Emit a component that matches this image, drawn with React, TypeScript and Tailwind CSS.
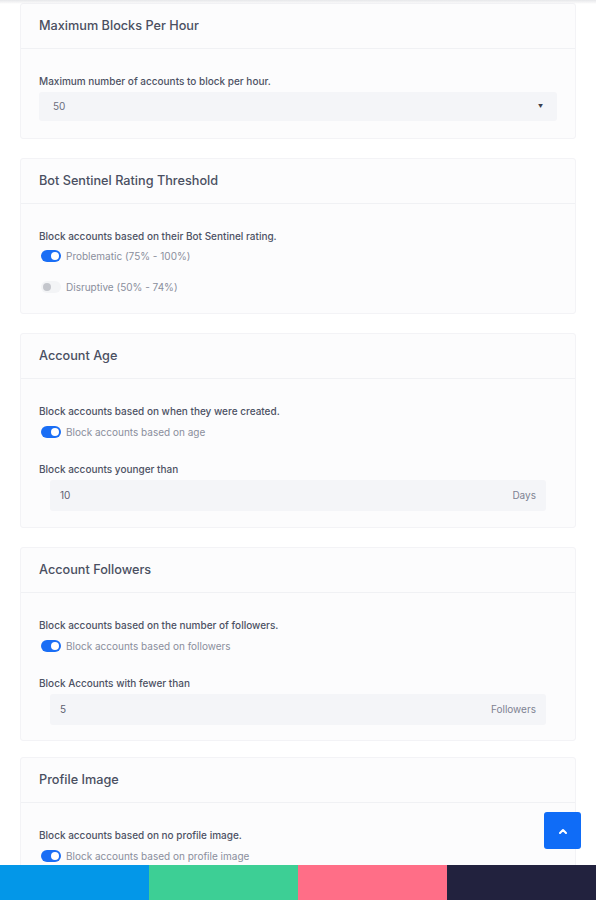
import React from 'react';

const FONT = { fontFamily: 'Inter, "Noto Sans", sans-serif' };

function Toggle({ on }: { on: boolean }) {
  return on ? (
    <span className="relative inline-block w-[20px] h-[12px] rounded-full bg-[#1a6ef5] shrink-0">
      <span className="absolute right-[2px] top-[2px] w-[8px] h-[8px] rounded-full bg-white" />
    </span>
  ) : (
    <span className="relative inline-block w-[20px] h-[12px] rounded-full bg-[#f3f4f6] shrink-0">
      <span className="absolute left-[2px] top-[2px] w-[8px] h-[8px] rounded-full bg-[#c4c6cc]" />
    </span>
  );
}

function Card({ title, children, pb, className = '' }: { title: string; children: React.ReactNode; pb: string; className?: string }) {
  return (
    <div className={`bg-[#fcfcfd] border border-[#f3f3f6] rounded-[3px] ${className}`}>
      <div className="h-[45px] flex items-center px-[18px] border-b border-[#f0f1f4]">
        <h3 className="text-[12.7px] font-medium text-[#4a4f61]">{title}</h3>
      </div>
      <div className={`px-[18px] pt-[26px] ${pb}`}>{children}</div>
    </div>
  );
}

function Desc({ children, className = '' }: { children: React.ReactNode; className?: string }) {
  return <p className={`text-[10px] leading-[12px] font-medium text-[#4d5264] ${className}`}>{children}</p>;
}

function SwitchRow({ on, label }: { on: boolean; label: string }) {
  return (
    <div className="flex items-center gap-[5px] h-[12px] pl-[2px]">
      <Toggle on={on} />
      <span className="text-[10px] text-[#8a8e9c]">{label}</span>
    </div>
  );
}

function UnitInput({ value, unit }: { value: string; unit: string }) {
  return (
    <div className="mx-[11px] mt-[5px] h-[31px] bg-[#f4f5f8] rounded-[3px] flex items-center justify-between px-[10px]">
      <span className="text-[10px] text-[#5c6070]">{value}</span>
      <span className="text-[10px] text-[#7e8292]">{unit}</span>
    </div>
  );
}

export default function App() {
  return (
    <div className="min-h-screen bg-white relative" style={FONT}>
      <div className="fixed top-0 left-0 right-0 h-[4px] bg-gradient-to-b from-[#e6e7ea] to-transparent z-10" />
      <div className="px-[20px] pt-[3px] pb-[60px] flex flex-col gap-[19px]">
        <Card title="Maximum Blocks Per Hour" pb="pb-[17px]">
          <Desc>Maximum number of accounts to block per hour.</Desc>
          <div className="mt-[5px] h-[29px] bg-[#f4f5f8] rounded-[3px] flex items-center justify-between px-[14px]">
            <span className="text-[10px] text-[#6b6f7e]">50</span>
            <span className="text-[5px] text-[#3b3f4c]">▼</span>
          </div>
        </Card>

        <Card title="Bot Sentinel Rating Threshold" pb="pb-[20px]">
          <Desc>Block accounts based on their Bot Sentinel rating.</Desc>
          <div className="mt-[8px] flex flex-col gap-[19px]">
            <SwitchRow on label="Problematic (75% - 100%)" />
            <SwitchRow on={false} label="Disruptive (50% - 74%)" />
          </div>
        </Card>

        <Card title="Account Age" pb="pb-[16px]">
          <Desc>Block accounts based on when they were created.</Desc>
          <div className="mt-[9px]">
            <SwitchRow on label="Block accounts based on age" />
          </div>
          <Desc className="mt-[25px]">Block accounts younger than</Desc>
          <UnitInput value="10" unit="Days" />
        </Card>

        <Card title="Account Followers" pb="pb-[15px]">
          <Desc>Block accounts based on the number of followers.</Desc>
          <div className="mt-[9px]">
            <SwitchRow on label="Block accounts based on followers" />
          </div>
          <Desc className="mt-[25px]">Block Accounts with fewer than</Desc>
          <UnitInput value="5" unit="Followers" />
        </Card>

        <Card title="Profile Image" pb="pb-[60px]" className="-mt-[3px]">
          <Desc>Block accounts based on no profile image.</Desc>
          <div className="mt-[9px]">
            <SwitchRow on label="Block accounts based on profile image" />
          </div>
        </Card>
      </div>

      <button className="fixed left-[544px] top-[812px] w-[37px] h-[37px] rounded-[3px] bg-[#0f6cf7] flex items-center justify-center z-20">
        <svg width="8" height="6" viewBox="0 0 8 6" fill="none">
          <path d="M1 5 L4 2 L7 5" stroke="white" strokeWidth="2" strokeLinecap="round" strokeLinejoin="round" />
        </svg>
      </button>

      <div className="fixed bottom-0 left-0 right-0 h-[35px] grid grid-cols-4 z-20">
        <div className="bg-[#0397e8]" />
        <div className="bg-[#3dcf95]" />
        <div className="bg-[#ff6e87]" />
        <div className="bg-[#22223e]" />
      </div>
    </div>
  );
}
